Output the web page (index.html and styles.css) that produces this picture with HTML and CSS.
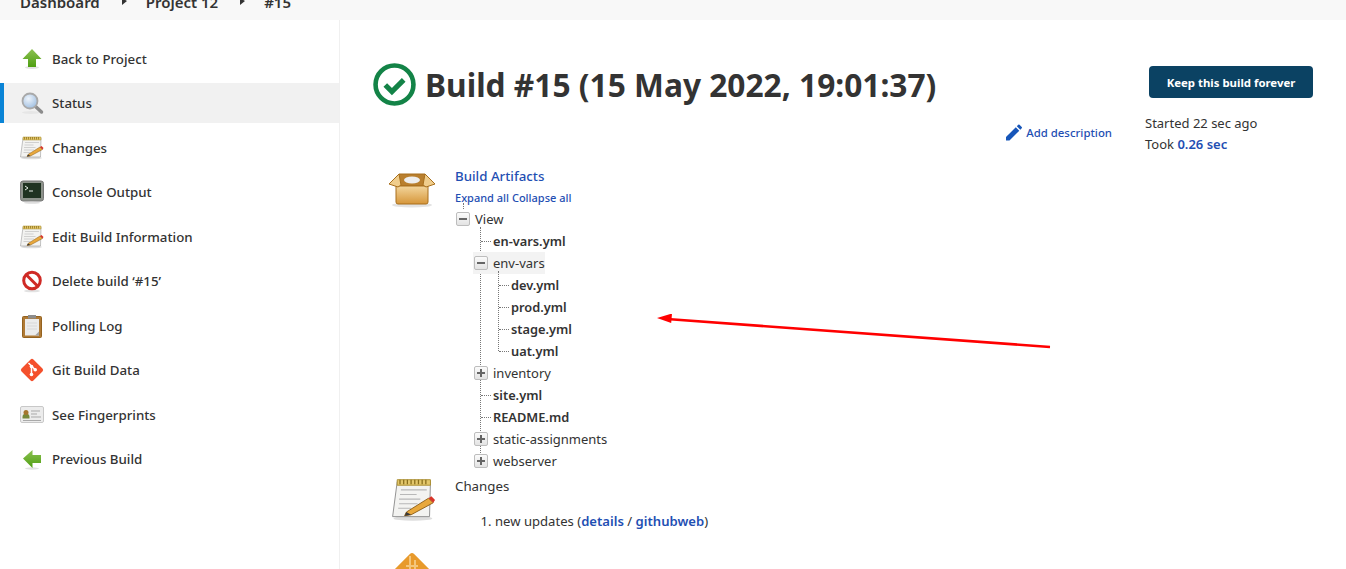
FILE: index.html
```html
<!DOCTYPE html>
<html lang="en">
<head>
<meta charset="utf-8">
<title>Build #15</title>
<link rel="stylesheet" href="styles.css">
</head>
<body>
<svg class="defs" width="0" height="0" aria-hidden="true">
  <defs>
    <linearGradient id="gGreen" x1="0" y1="0" x2="0" y2="1"><stop offset="0" stop-color="#8cc152"/><stop offset="1" stop-color="#4f9f12"/></linearGradient>
    <linearGradient id="gBox" x1="0" y1="0" x2="0" y2="1"><stop offset="0" stop-color="#f3d59c"/><stop offset="1" stop-color="#d6963a"/></linearGradient>
    <radialGradient id="gLens" cx=".4" cy=".35" r=".7"><stop offset="0" stop-color="#eef4fb"/><stop offset="1" stop-color="#9dbde0"/></radialGradient>
    <symbol id="i-note" viewBox="0 0 48 48">
      <ellipse cx="23" cy="44" rx="21" ry="2.500" fill="#ddd"/>
      <path d="M6 4h36l-1 38H1z" fill="#f3f3f1" stroke="#8b8b8b" stroke-width="1"/>
      <path d="M6 2h36v6H6z" fill="#e3c76b" stroke="#a98c2c" stroke-width="1"/>
      <path d="M9 2v5M13 2v5M17 2v5M21 2v5M25 2v5M29 2v5M33 2v5M37 2v5" stroke="#8a6f1c" stroke-width="1.400"/>
      <path d="M10 13h28M9 18h18M8 23h23M8 28h20M7 33h14" stroke="#b8b8b8" stroke-width="1.200"/>
      <path d="M16 37l24-15 5 5-24 13-7 1z" fill="#e8a83c" stroke="#8d5d16" stroke-width="1"/>
      <path d="M40 22l3-2 4 4-2 3z" fill="#d8352a"/>
      <path d="M16 37l-2 4 7-1z" fill="#3a3a3a"/>
    </symbol>
    <symbol id="i-box" viewBox="0 0 48 48">
      <ellipse cx="24" cy="40" rx="20" ry="2.500" fill="#e3e3e3"/>
      <path d="M11 9h26l3 12H8z" fill="#b97f2e" stroke="#a86f1c" stroke-width="1"/>
      <ellipse cx="24" cy="15" rx="8" ry="3.500" fill="#eee"/>
      <path d="M8 21h32v16a2 2 0 0 1-2 2H10a2 2 0 0 1-2-2z" fill="url(#gBox)" stroke="#a86f1c" stroke-width="1"/>
      <path d="M11 9L1 19l9 3 3-2zM37 9l10 10-9 3-3-2z" fill="#f0cd8c" stroke="#a86f1c" stroke-width="1"/>
    </symbol>
  </defs>
</svg>

<header class="topbar">
  <nav class="crumbs">
    <span class="crumb">Dashboard</span>
    <svg class="crumb-sep" width="6" height="8" viewBox="0 0 6 8"><path d="M0 0l5 3-5 4z" fill="#333"/></svg>
    <span class="crumb">Project 12</span>
    <svg class="crumb-sep" width="6" height="8" viewBox="0 0 6 8"><path d="M0 0l5 3-5 4z" fill="#333"/></svg>
    <span class="crumb">#15</span>
  </nav>
</header>

<div class="page">
  <aside class="sidebar">
    <a class="task">
      <svg class="task-icon" viewBox="0 0 24 24"><ellipse cx="12" cy="20.500" rx="7" ry="1.500" fill="#e2e2e2"/><path d="M12 2l9.500 10H16v8H8v-8H2.500z" fill="url(#gGreen)"/></svg>
      <span>Back to Project</span>
    </a>
    <a class="task task-active">
      <svg class="task-icon" viewBox="0 0 24 24"><ellipse cx="11" cy="21.500" rx="9" ry="1.500" fill="#e6e6e6"/><path d="M15 15l6.500 6" stroke="#8c8c8c" stroke-width="3.500" stroke-linecap="round"/><circle cx="10" cy="10" r="7.500" fill="url(#gLens)" stroke="#a9a9a9" stroke-width="1.800"/></svg>
      <span>Status</span>
    </a>
    <a class="task">
      <svg class="task-icon" viewBox="0 0 48 48"><use href="#i-note"/></svg>
      <span>Changes</span>
    </a>
    <a class="task">
      <svg class="task-icon" viewBox="0 0 24 24"><rect x="0.500" y="1" width="23" height="20" rx="2.500" fill="#8d938b" stroke="#777"/><rect x="3" y="3" width="18" height="15" fill="#1f3321"/><path d="M5 6l3 2-3 2" stroke="#e8f0e8" fill="none"/><path d="M9 11h4" stroke="#e8f0e8"/><ellipse cx="12" cy="22.700" rx="8" ry="1" fill="#ddd"/></svg>
      <span>Console Output</span>
    </a>
    <a class="task">
      <svg class="task-icon" viewBox="0 0 48 48"><use href="#i-note"/></svg>
      <span>Edit Build Information</span>
    </a>
    <a class="task">
      <svg class="task-icon" viewBox="0 0 24 24"><ellipse cx="12" cy="22" rx="8" ry="1.300" fill="#e2e2e2"/><circle cx="12" cy="11.500" r="8.300" fill="#fff" stroke="#cf2a25" stroke-width="3"/><path d="M6.500 6l11 11" stroke="#cf2a25" stroke-width="3"/></svg>
      <span>Delete build ‘#15’</span>
    </a>
    <a class="task">
      <svg class="task-icon" viewBox="0 0 24 24"><rect x="2.500" y="2.500" width="19" height="21" rx="1" fill="#b07a35" stroke="#94621f"/><rect x="5" y="5" width="14" height="16.500" fill="#ececec"/><rect x="8" y="1" width="8" height="3.500" fill="#8d8d8d"/><path d="M7 9h10M7 12h10M7 15h10" stroke="#d8d8d8"/><path d="M19 21.500v-4l-4 4z" fill="#a5a5a5"/></svg>
      <span>Polling Log</span>
    </a>
    <a class="task">
      <svg class="task-icon" viewBox="0 0 24 24"><rect x="3.600" y="3.600" width="16.800" height="16.800" rx="2" transform="rotate(45 12 12)" fill="#f4502c"/><path d="M8.500 5l6.500 6.500M11.500 8.500v8" stroke="#fff" stroke-width="1.500" fill="none"/><circle cx="11.500" cy="8.500" r="1.800" fill="#fff"/><circle cx="15.200" cy="11.800" r="1.800" fill="#fff"/><circle cx="11.500" cy="16.500" r="1.800" fill="#fff"/></svg>
      <span>Git Build Data</span>
    </a>
    <a class="task">
      <svg class="task-icon" viewBox="0 0 24 24"><rect x="0.500" y="3.500" width="23" height="16" rx="1.500" fill="#ececec" stroke="#c8c8c8"/><path d="M2.500 14a3 3 0 0 1 7 0v1.500h-7z" fill="#76883a"/><circle cx="6" cy="9.500" r="2.500" fill="#a5762e"/><path d="M11 8h9M11 11h6M11 14h10M3 17.500h18" stroke="#a9a9a9"/></svg>
      <span>See Fingerprints</span>
    </a>
    <a class="task">
      <svg class="task-icon" viewBox="0 0 24 24"><ellipse cx="12" cy="21.500" rx="7" ry="1.200" fill="#e2e2e2"/><path d="M3 11.500L12.500 3v5H21v8h-8.500v5z" fill="url(#gGreen)"/></svg>
      <span>Previous Build</span>
    </a>
  </aside>

  <main class="main">
    <div class="build-head">
      <div class="head-left">
        <h1 class="title">
          <svg class="status-icon" viewBox="0 0 42 42"><circle cx="21" cy="21" r="18.500" fill="none" stroke="#138347" stroke-width="4.500"/><path d="M12 21.500l6.500 6.500 11.500-11.500" fill="none" stroke="#138347" stroke-width="5"/></svg>
          <span>Build #15 (15 May 2022, 19:01:37)</span>
        </h1>
        <a class="add-desc">
          <svg class="pencil" width="16" height="17" viewBox="0 0 17 17"><path d="M0 17v-3.700L10.400 2.900l3.700 3.700L3.700 17zM11.500 1.800L13 .3a1 1 0 0 1 1.400 0l2.300 2.300a1 1 0 0 1 0 1.400l-1.500 1.500z" fill="#1756b9"/></svg>
          <span>Add description</span>
        </a>
      </div>
      <div class="head-right">
        <button class="keep" type="button">Keep this build forever</button>
        <p class="started">Started 22 sec ago</p>
        <p class="took">Took <a class="link">0.26 sec</a></p>
      </div>
    </div>

    <section class="block block-artifacts">
      <svg class="block-icon" viewBox="0 0 48 48"><use href="#i-box"/></svg>
      <div class="block-body">
        <a class="artifact-title">Build Artifacts</a>
        <p class="expand"><a>Expand all</a> <a>Collapse all</a></p>
        <ul class="tree tree-root">
          <li>
            <div class="node"><span class="toggle"></span><span class="folder">View</span></div>
            <ul class="tree">
              <li><div class="node leaf"><span>en-vars.yml</span></div></li>
              <li>
                <div class="node node-hover"><span class="toggle"></span><span class="folder">env-vars</span></div>
                <ul class="tree">
                  <li><div class="node leaf"><span>dev.yml</span></div></li>
                  <li><div class="node leaf"><span>prod.yml</span></div></li>
                  <li><div class="node leaf"><span>stage.yml</span></div></li>
                  <li><div class="node leaf"><span>uat.yml</span></div></li>
                </ul>
              </li>
              <li><div class="node"><span class="toggle toggle-plus"></span><span class="folder">inventory</span></div></li>
              <li><div class="node leaf"><span>site.yml</span></div></li>
              <li><div class="node leaf"><span>README.md</span></div></li>
              <li><div class="node"><span class="toggle toggle-plus"></span><span class="folder">static-assignments</span></div></li>
              <li><div class="node"><span class="toggle toggle-plus"></span><span class="folder">webserver</span></div></li>
            </ul>
          </li>
        </ul>
      </div>
    </section>

    <section class="block block-changes">
      <svg class="block-icon" viewBox="-4 -2 52 52"><use href="#i-note" width="48" height="48"/></svg>
      <div class="block-body">
        <p class="changes-title">Changes</p>
        <ol class="changes-list">
          <li>new updates (<a class="link">details</a> / <a class="link">githubweb</a>)</li>
        </ol>
      </div>
    </section>

    <section class="block block-next">
      <svg class="block-icon" viewBox="0 0 48 48"><rect x="7" y="7" width="34" height="34" rx="3" transform="rotate(45 24 24)" fill="#e89a2c"/><path d="M22 4v18M27 8v14M18 14h12" stroke="#f4c67c" stroke-width="2"/></svg>
    </section>
  </main>
</div>

<svg class="annotation" width="400" height="36" viewBox="0 0 400 36">
  <path d="M395 33L12 5" stroke="#f00" stroke-width="2.600"/>
  <path d="M2 4l15-4.500-.8 9.500z" fill="#f00"/>
</svg>
</body>
</html>
```
FILE: styles.css
```css
* { box-sizing: border-box; }
html, body { margin: 0; height: 569px; overflow: hidden; }
body {
  font-family: "Noto Sans", "Open Sans", sans-serif;
  font-size: 13.3px;
  color: #333;
  background: #fff;
  position: relative;
}
p, ul, ol, h1 { margin: 0; padding: 0; }
a { color: inherit; text-decoration: none; }
.defs { position: absolute; }

.topbar { height: 20px; background: #f8f8f8; overflow: hidden; }
.crumbs { display: flex; align-items: center; height: 16px; margin-top: -6px; padding-left: 20px; }
.crumb { font-size: 15px; font-weight: 600; line-height: 16px; }
.crumb-sep { margin: 0 18px 0 22px; }

.page { display: flex; height: 549px; }

.sidebar {
  width: 340px;
  flex: none;
  padding-top: 19px;
  border-right: 1px solid #f0f0f0;
  display: flex;
  flex-direction: column;
  gap: 4.44px;
}
.task { display: flex; align-items: center; gap: 8px; height: 40px; padding-left: 20px; font-size: 13.3px; font-weight: 500; }
.task-active { background: #f1f1f1; border-left: 4px solid #0a84d6; padding-left: 16px; }
.task-icon { width: 24px; height: 24px; flex: none; }

.main { flex: 1; min-width: 0; padding: 43px 33px 0 33px; }
.build-head { display: flex; height: 97px; }
.head-left { width: 739px; flex: none; display: flex; flex-direction: column; }
.title { display: flex; align-items: center; gap: 9px; height: 43px; font-size: 31.7px; font-weight: 700; line-height: 43px; white-space: nowrap; }
.status-icon { width: 43px; height: 43px; flex: none; }
.add-desc { display: flex; align-items: center; justify-content: flex-end; gap: 4px; margin-top: 17px; height: 18px; font-size: 11.4px; font-weight: 500; color: #1f4fb3; }
.pencil { flex: none; }
.head-right { margin-left: 33px; padding-top: 3px; }
.keep {
  display: block;
  width: 164px;
  height: 32px;
  margin-left: 4px;
  background: #0b4263;
  color: #fff;
  border: 0;
  border-radius: 4px;
  font: 700 11.4px "Noto Sans", sans-serif;
}
.started { margin-top: 15px; line-height: 21px; font-size: 13px; }
.took { line-height: 21px; font-size: 13px; }
.link { color: #1f4fb3; font-weight: 600; }

.block { display: flex; gap: 19px; padding-left: 15px; }
.block-icon { width: 48px; height: 48px; flex: none; }
.block-artifacts { height: 316px; padding-top: 5px; }
.block-body { flex: 1; }
.artifact-title { display: block; color: #1f4fb3; font-weight: 500; font-size: 13.3px; line-height: 22px; height: 22px; }
.expand { color: #1f4fb3; font-size: 11px; font-weight: 500; line-height: 21px; height: 21px; }

.tree { list-style: none; position: relative; }
.tree .tree { margin-left: 18px; }
.tree .tree::before { content: ""; position: absolute; left: 7px; top: -3px; bottom: 11px; border-left: 1px dotted #777; }
.tree-root::before { content: ""; position: absolute; left: 8px; top: -5px; height: 6px; border-left: 1px dotted #777; }
.node { position: relative; display: flex; align-items: center; height: 22px; padding-left: 20px; font-weight: 600; font-size: 12.8px; width: max-content; }
.folder { font-weight: 400; font-size: 13px; }
.leaf::before { content: ""; position: absolute; left: 8px; width: 10px; top: 11px; border-top: 1px dotted #777; }
.node-hover { background: #f3f3f3; }
.toggle {
  position: absolute;
  left: 1px;
  top: 4px;
  width: 14px;
  height: 14px;
  background: linear-gradient(#fbfbfb, #e3e3e3);
  border: 1px solid #bdbdbd;
  border-radius: 2px;
}
.toggle::before { content: ""; position: absolute; left: 2px; right: 2px; top: 4.5px; height: 2px; background: #666; }
.toggle-plus::after { content: ""; position: absolute; top: 2px; bottom: 2px; left: 4.5px; width: 2px; background: #666; }

.block-changes { height: 76px; }
.changes-title { line-height: 22px; margin-top: -1px; }
.changes-list { margin-top: 13px; padding-left: 40px; line-height: 22px; font-size: 13.1px; }
.block-next { padding-top: 0; }

.annotation { position: absolute; left: 655px; top: 314px; }
```
